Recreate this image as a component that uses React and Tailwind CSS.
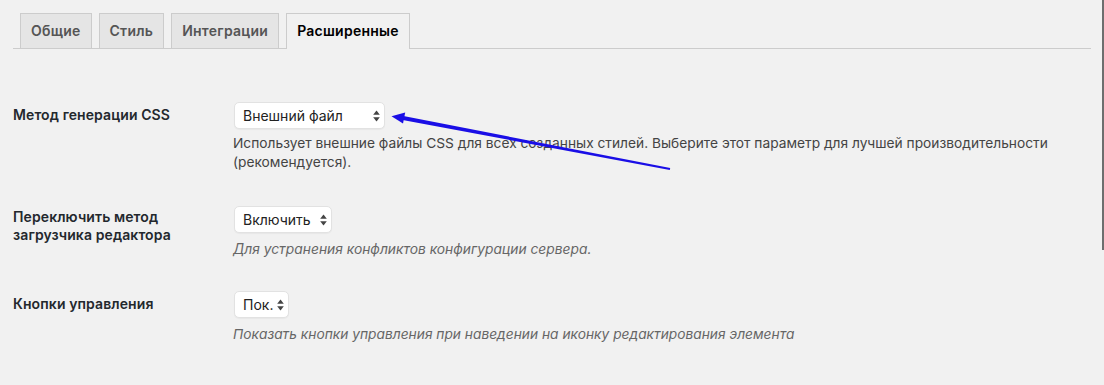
import React from "react";

function Arrows() {
  return (
    <svg width="7" height="12" viewBox="0 0 7 12" className="shrink-0">
      <path d="M3.5 0.5 L6.8 4.8 L0.2 4.8 Z" fill="#444" />
      <path d="M3.5 11.5 L6.8 7.2 L0.2 7.2 Z" fill="#444" />
    </svg>
  );
}

function Select({ label, w }) {
  return (
    <div
      className={`ml-px h-[27px] ${w} flex items-center justify-between gap-[3px] pl-[8px] pr-[4px] bg-white border border-[#e2e2e2] rounded-[5px] shadow-[0_1px_1px_rgba(0,0,0,0.04)] text-[14px] text-[#222] leading-none`}
    >
      <span>{label}</span>
      <Arrows />
    </div>
  );
}

const tabs = ["Общие", "Стиль", "Интеграции", "Расширенные"];

export default function App() {
  return (
    <div
      className="relative w-[1104px] h-[385px] overflow-hidden bg-[#f1f1f1]"
      style={{ fontFamily: "Inter, Roboto, 'Noto Sans', sans-serif" }}
    >
      <div className="absolute right-0 top-0 w-[2px] h-[250px] bg-[#6e6e6e]" />

      <div className="pt-[13px] ml-[13px] w-[1078px]">
        <div className="flex gap-[7px] pl-[7px] border-b border-[#ccc]">
          {tabs.map((t, i) => {
            const active = i === 3;
            return (
              <div
                key={t}
                className={
                  active
                    ? "-mb-px px-[10px] pt-[5px] pb-[6px] border border-b-0 border-[#ccc] bg-[#f1f1f1] text-[14px] leading-[24px] font-semibold tracking-[0.25px] text-black"
                    : "px-[10px] py-[5px] border border-b-0 border-[#ccc] bg-[#e5e5e5] text-[14px] leading-[24px] font-semibold tracking-[0.25px] text-[#555]"
                }
              >
                {t}
              </div>
            );
          })}
        </div>
      </div>

      <div className="pl-[13px]">
        {/* Row 1 */}
        <div className="flex mt-[53px]">
          <div className="w-[220px] mt-[4px] text-[14px] leading-[18px] font-semibold tracking-[0.1px] text-[#23282d]">
            Метод генерации CSS
          </div>
          <div className="flex-1">
            <Select label="Внешний файл" w="w-[151px]" />
            <p className="mt-[5px] text-[13.75px] leading-[19px] text-[#444] pr-[40px]">
              Использует внешние файлы CSS для всех созданных стилей. Выберите этот параметр для лучшей производительности (рекомендуется).
            </p>
          </div>
        </div>

        {/* Row 2 */}
        <div className="flex mt-[34px]">
          <div className="w-[220px] mt-[2px] text-[14px] leading-[18px] font-semibold tracking-[0.1px] text-[#23282d]">
            Переключить метод
            <br />
            загрузчика редактора
          </div>
          <div className="flex-1">
            <Select label="Включить" w="w-[98px]" />
            <p className="mt-[7px] text-[13.8px] leading-[19px] italic text-[#666]">
              Для устранения конфликтов конфигурации сервера.
            </p>
          </div>
        </div>

        {/* Row 3 */}
        <div className="flex mt-[32px]">
          <div className="w-[220px] mt-[4px] text-[14px] leading-[18px] font-semibold tracking-[0.1px] text-[#23282d]">
            Кнопки управления
          </div>
          <div className="flex-1">
            <Select label="Пок." w="w-[55px]" />
            <p className="mt-[7px] text-[13.75px] leading-[19px] italic text-[#666]">
              Показать кнопки управления при наведении на иконку редактирования элемента
            </p>
          </div>
        </div>
      </div>

      <svg
        className="absolute left-0 top-0 pointer-events-none"
        width="1104"
        height="385"
      >
        <polygon
          points="403.4,116.0 670.2,168.0 669.8,170.0 402.6,120.0"
          fill="#1a0ee6"
        />
        <polygon points="391.5,116.2 405.2,112.6 403.0,123.4" fill="#1a0ee6" />
      </svg>
    </div>
  );
}
